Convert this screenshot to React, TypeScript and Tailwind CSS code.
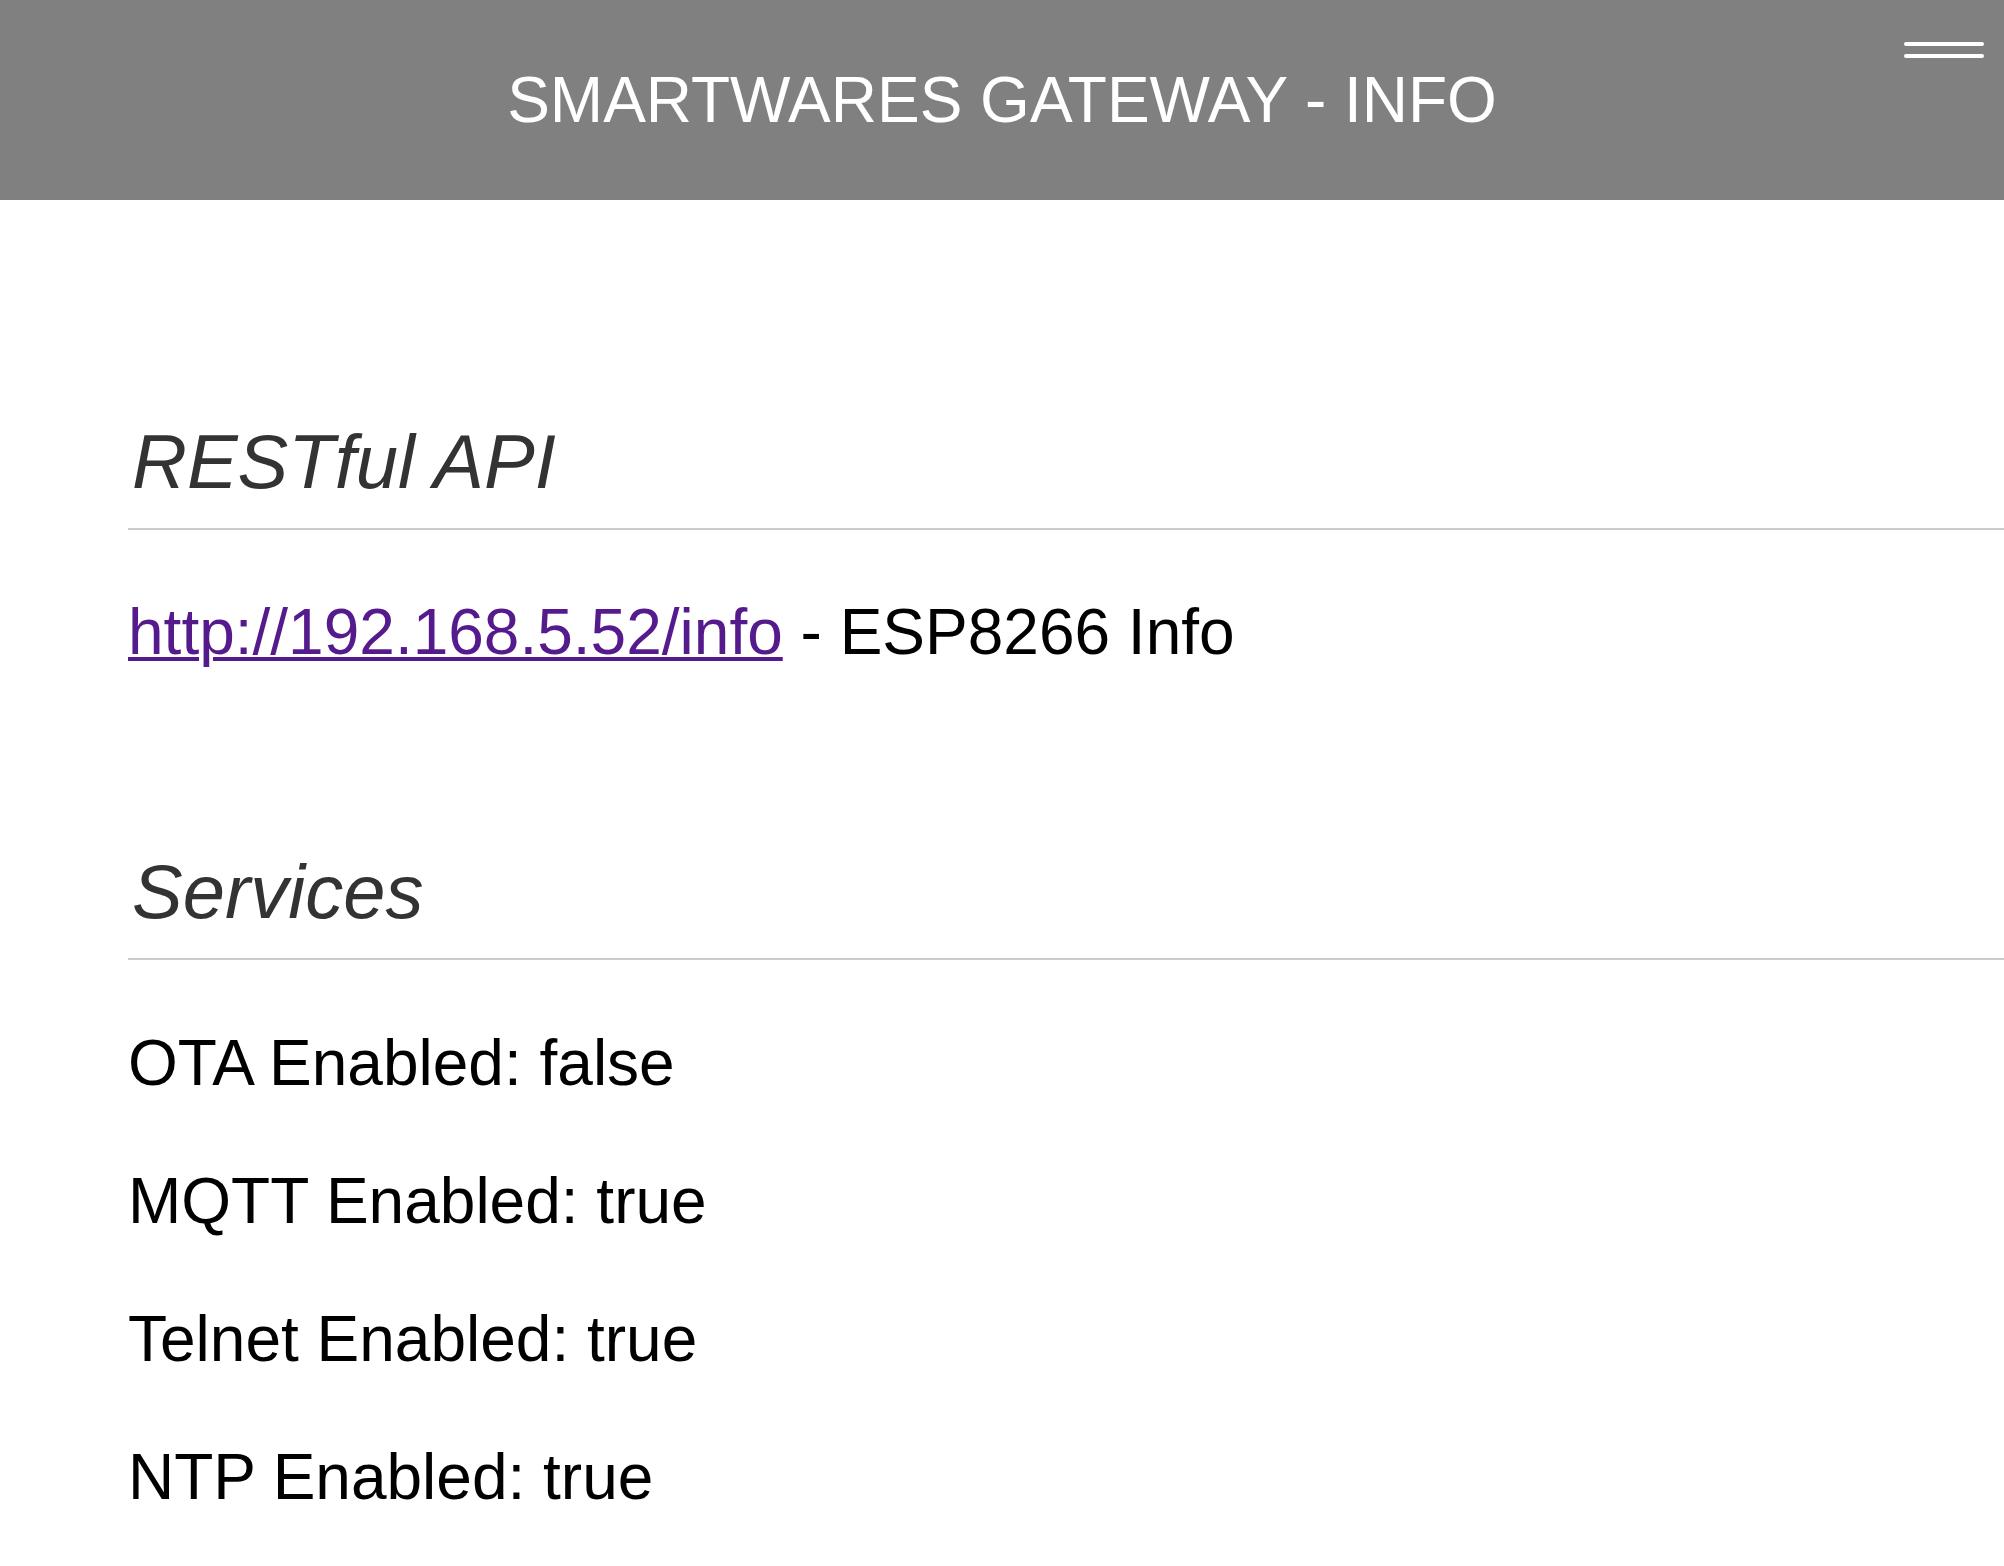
const services = [
  { name: "OTA", enabled: false },
  { name: "MQTT", enabled: true },
  { name: "Telnet", enabled: true },
  { name: "NTP", enabled: true },
];

const App = () => {
  return (
    <div className="min-h-screen bg-white font-['Liberation_Sans',Arial,sans-serif] text-black">
      {/* Barre du haut */}
      <header className="relative flex h-[200px] items-center justify-center bg-[#808080]">
        <h1 className="text-[64px] font-normal leading-[64px] text-white">SMARTWARES GATEWAY - INFO</h1>
        <button className="absolute right-[20px] top-[42px] flex w-[80px] flex-col gap-[8px]">
          <span className="block h-[4px] w-full rounded-full bg-white" />
          <span className="block h-[4px] w-full rounded-full bg-white" />
        </button>
      </header>

      <main className="pl-[128px]">
        <h2 className="mt-[224px] border-b-2 border-[#cccccc] pb-[28px] indent-[4px] text-[76px] font-normal italic leading-[76px] text-[#333333]">
          RESTful API
        </h2>
        <p className="mt-[70px] text-[64px] leading-[64px]">
          <a
            href="#"
            className="text-[#551a8b] underline decoration-[4px] underline-offset-[3px]"
          >
            http://192.168.5.52/info
          </a>{" "}
          - ESP8266 Info
        </p>

        <h2 className="mt-[190px] border-b-2 border-[#cccccc] pb-[28px] indent-[4px] text-[76px] font-normal italic leading-[76px] text-[#333333]">
          Services
        </h2>
        <div className="mt-[71px] flex flex-col gap-[74px] pb-[60px]">
          {services.map((s) => (
            <p key={s.name} className="text-[64px] leading-[64px]">
              {s.name} Enabled: {s.enabled ? "true" : "false"}
            </p>
          ))}
        </div>
      </main>
    </div>
  );
};

export default App;
